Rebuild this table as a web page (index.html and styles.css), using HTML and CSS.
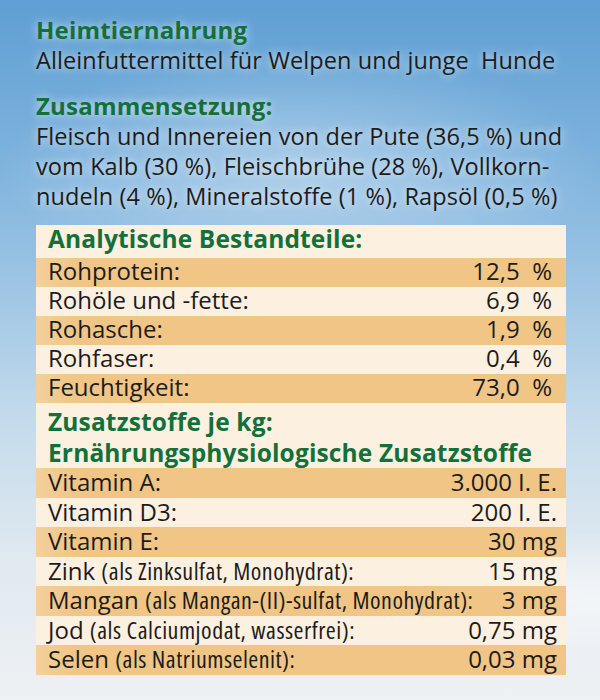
FILE: index.html
```html
<!DOCTYPE html>
<html lang="de">
<head>
<meta charset="utf-8">
<title>Heimtiernahrung</title>
<link rel="stylesheet" href="styles.css">
</head>
<body>
<main class="label">
  <h2 class="head head-first">Heimtiernahrung</h2>
  <p class="text">Alleinfuttermittel für Welpen und junge&nbsp; Hunde</p>
  <h2 class="head head-second">Zusammensetzung:</h2>
  <p class="text">Fleisch und Innereien von der Pute (36,5&nbsp;%) und<br>vom Kalb (30&nbsp;%), Fleischbrühe (28&nbsp;%), Vollkorn-<br>nudeln (4&nbsp;%), Mineralstoffe (1&nbsp;%), Rapsöl (0,5&nbsp;%)</p>

  <section class="table">
    <div class="thead thead-a">Analytische Bestandteile:</div>
    <div class="row row-a odd"><span>Rohprotein:</span><span class="val pct">12,5&nbsp;&nbsp;%</span></div>
    <div class="row row-a"><span>Rohöle und -fette:</span><span class="val pct">6,9&nbsp;&nbsp;%</span></div>
    <div class="row row-a odd"><span>Rohasche:</span><span class="val pct">1,9&nbsp;&nbsp;%</span></div>
    <div class="row row-a"><span>Rohfaser:</span><span class="val pct">0,4&nbsp;&nbsp;%</span></div>
    <div class="row row-a odd"><span>Feuchtigkeit:</span><span class="val pct">73,0&nbsp;&nbsp;%</span></div>
    <div class="thead thead-b">Zusatzstoffe je kg:<br>Ernährungsphysiologische Zusatzstoffe</div>
    <div class="row row-b odd"><span>Vitamin A:</span><span class="val">3.000 I. E.</span></div>
    <div class="row row-b"><span>Vitamin D3:</span><span class="val">200 I. E.</span></div>
    <div class="row row-b odd"><span>Vitamin E:</span><span class="val">30 mg</span></div>
    <div class="row row-b"><span>Zink <span class="cond">(als Zinksulfat, Monohydrat):</span></span><span class="val">15 mg</span></div>
    <div class="row row-b odd"><span>Mangan <span class="cond">(als Mangan-(II)-sulfat, Monohydrat):</span></span><span class="val">3 mg</span></div>
    <div class="row row-b"><span>Jod <span class="cond">(als Calciumjodat, wasserfrei):</span></span><span class="val">0,75 mg</span></div>
    <div class="row row-b odd"><span>Selen <span class="cond">(als Natriumselenit):</span></span><span class="val">0,03 mg</span></div>
  </section>
</main>
</body>
</html>
```

FILE: styles.css
```css
html, body {
  margin: 0;
  padding: 0;
}

body {
  width: 600px;
  height: 700px;
  overflow: hidden;
  font-family: "Open Sans", "Noto Sans", "Liberation Sans", sans-serif;
  color: #1c1c1c;
  background:
    radial-gradient(ellipse 260px 70px at 590px 600px, rgba(255,255,255,0.55), rgba(255,255,255,0) 100%),
    radial-gradient(ellipse 300px 120px at 300px 170px, rgba(255,255,255,0.35), rgba(255,255,255,0) 100%),
    linear-gradient(to bottom, #5f9fd3 0%, #79b0dc 20%, #9cc4e4 40%, #c4dbec 60%, #e0e9f0 80%, #eef1f3 100%);
}

.label {
  padding: 15px 0 0 36px;
  width: 530px;
}

.head {
  margin: 0;
  font-size: 24px;
  font-weight: 700;
  line-height: 30px;
  letter-spacing: 0.2px;
  color: #13703b;
  text-shadow: 0 0 10px rgba(255,255,255,0.7);
}

.head-second {
  margin-top: 16px;
}

.text {
  margin: 0;
  font-size: 23.5px;
  line-height: 30px;
  letter-spacing: 0.1px;
  white-space: nowrap;
  text-shadow: 0 0 10px rgba(255,255,255,0.8);
}

.table {
  margin-top: 14px;
  width: 530px;
  background: #fcf0e0;
}

.thead {
  padding-left: 12px;
  font-size: 24.5px;
  font-weight: 700;
  letter-spacing: 0.15px;
  color: #13703b;
}

.thead-a {
  height: 33px;
  line-height: 27px;
}

.thead-b {
  padding-top: 3px;
  height: 62px;
  line-height: 31px;
}

.row {
  display: flex;
  justify-content: space-between;
  padding: 0 9px 0 12px;
  font-size: 24px;
  white-space: nowrap;
}

.row-a {
  height: 29px;
  line-height: 26.5px;
}

.row-b {
  height: 29.5px;
  line-height: 27px;
}

.odd {
  background: linear-gradient(to right, #f3d09c 0%, #f0c585 8%, #f0c585 100%);
}

.val.pct {
  padding-right: 5px;
}

.cond {
  font-stretch: 75%;
  letter-spacing: 0.5px;
}
```
